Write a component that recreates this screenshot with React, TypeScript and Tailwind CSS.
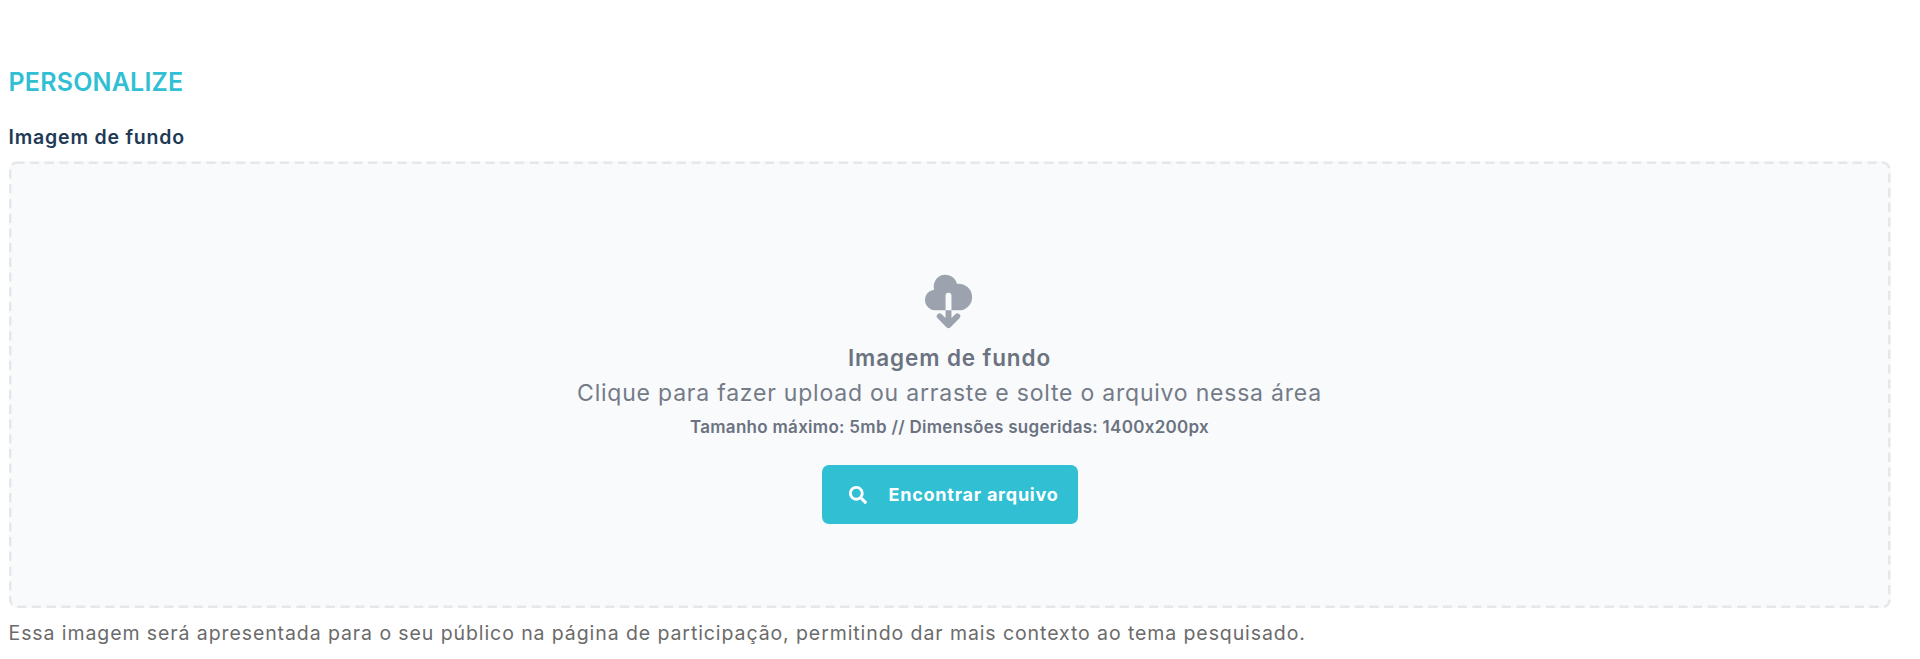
import { HiCloudDownload } from "react-icons/hi";
import { FaSearch } from "react-icons/fa";

function UploadArea() {
  return (
    <div className="relative mt-[12px] flex h-[447px] w-[1882px] flex-col items-center rounded-lg bg-[#f8fafc] pt-[111px] text-[#6b7280]">
      <svg className="pointer-events-none absolute inset-0 h-full w-full" fill="none" aria-hidden="true">
        <rect x="1.25" y="1.75" width="1879" height="444" rx="6.5" stroke="#e5e7eb" strokeWidth="2.5" strokeDasharray="9.2 5.5" strokeDashoffset="1.5" />
      </svg>
      <HiCloudDownload className="mr-[2px] size-[59px] text-[#9ca3af]" />
      <p className="mt-[9px] whitespace-nowrap text-[22.5px]/[36px] font-semibold tracking-[0.88px]">Imagem de fundo</p>
      <p className="whitespace-nowrap text-[23px]/[34px] tracking-[0.78px] text-[#747b87]">
        Clique para fazer upload ou arraste e solte o arquivo nessa área
      </p>
      <p className="whitespace-nowrap text-[17px]/[34px] font-semibold tracking-[0.29px]">
        Tamanho máximo: 5mb // Dimensões sugeridas: 1400x200px
      </p>
      <button className="mt-[21px] flex h-[59px] w-[256px] items-center rounded-[7px] bg-[#31bfd4] pl-[27px] text-white">
        <FaSearch className="size-[18px]" />
        <span className="ml-[22px] whitespace-nowrap text-[18px]/[24px] font-bold tracking-[0.77px]">Encontrar arquivo</span>
      </button>
    </div>
  );
}

export default function App() {
  return (
    <main className="h-[659px] w-full overflow-hidden bg-white pl-[8.5px] pt-[64px] font-['Inter',sans-serif]">
      <h2 className="text-[25px]/[36px] font-semibold tracking-[0.2px] text-[#31bfd4]">PERSONALIZE</h2>
      <label className="mt-[25px] block text-[19.5px]/[24px] font-semibold tracking-[0.8px] text-[#1e3a56]">Imagem de fundo</label>
      <UploadArea />
      <p className="mt-[10px] whitespace-nowrap text-[19.5px]/[30px] tracking-[0.91px] text-[#6b6b6b]">
        Essa imagem será apresentada para o seu público na página de participação, permitindo dar mais contexto ao tema pesquisado.
      </p>
    </main>
  );
}
